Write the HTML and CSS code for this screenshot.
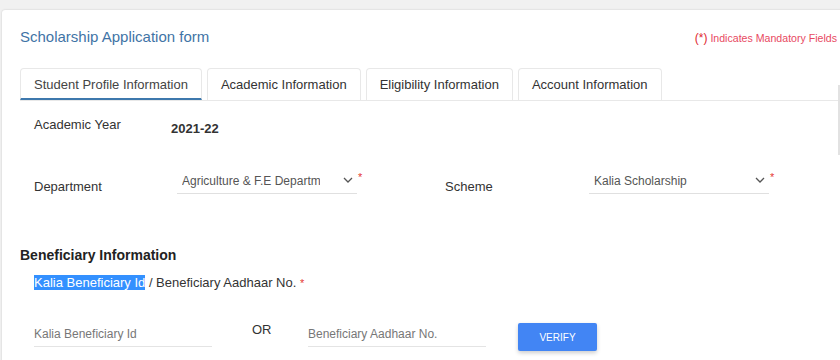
FILE: index.html
```html
<!DOCTYPE html>
<html>
<head>
<meta charset="utf-8">
<link rel="stylesheet" href="styles.css">
</head>
<body>
<div class="card">
  <div class="header">
    <h1 class="title">Scholarship Application form</h1>
    <div class="mandatory"><span class="star">(*)</span> Indicates Mandatory Fields</div>
  </div>
  <div class="tabs">
    <div class="tab active">Student Profile Information</div>
    <div class="tab">Academic Information</div>
    <div class="tab">Eligibility Information</div>
    <div class="tab">Account Information</div>
  </div>
  <div class="year-row">
    <div class="year-label">Academic Year</div>
    <div class="year-value">2021-22</div>
  </div>
  <div class="select-row">
    <div class="field-label">Department</div>
    <div class="select"><span class="select-text">Agriculture &amp; F.E Departme</span><svg class="chev" width="10" height="6" viewBox="0 0 10 6"><polyline points="1,1 5,5 9,1" fill="none" stroke="#555" stroke-width="1.3"/></svg></div>
    <div class="req">*</div>
    <div class="field-label">Scheme</div>
    <div class="select"><span class="select-text">Kalia Scholarship</span><svg class="chev" width="10" height="6" viewBox="0 0 10 6"><polyline points="1,1 5,5 9,1" fill="none" stroke="#555" stroke-width="1.3"/></svg></div>
    <div class="req">*</div>
  </div>
  <h2 class="section">Beneficiary Information</h2>
  <div class="sub"><span class="sel">Kalia Beneficiary Id</span> / Beneficiary Aadhaar No. <span class="req-inline">*</span></div>
  <div class="input-row">
    <div class="input">Kalia Beneficiary Id</div>
    <div class="or">OR</div>
    <div class="input">Beneficiary Aadhaar No.</div>
    <button class="verify">VERIFY</button>
  </div>
</div>
<div class="edge"></div>
</body>
</html>
```
FILE: styles.css
```css
html, body {
  margin: 0;
  padding: 0;
  overflow: hidden;
}
body {
  background: #f1f1f1;
  font-family: "Liberation Sans", Arial, sans-serif;
  color: #333;
  width: 840px;
  height: 360px;
  padding: 10px 0 0 2px;
  box-sizing: border-box;
}
.card {
  background: #fff;
  width: 850px;
  height: 360px;
  border-radius: 3px;
  box-shadow: 0 0 2px rgba(0,0,0,0.18);
  padding: 18px 0 0 18px;
  box-sizing: border-box;
}
.header {
  display: flex;
  justify-content: space-between;
  align-items: center;
  width: 817px;
  height: 18px;
}
.title {
  margin: 0;
  font-size: 15px;
  font-weight: normal;
  color: #3f74a6;
  line-height: 18px;
}
.mandatory {
  font-size: 10.6px;
  color: #e8495f;
  padding-top: 2px;
  white-space: nowrap;
}
.star {
  font-size: 12px;
  color: #e01f2f;
}
.tabs {
  display: flex;
  gap: 5px;
  margin-top: 22px;
  border-bottom: 1px solid #e8e8e8;
}
.tab {
  height: 32px;
  padding: 0 13px;
  border: 1px solid #e8e8e8;
  border-bottom: none;
  border-radius: 4px 4px 0 0;
  font-size: 13px;
  line-height: 32px;
  color: #333;
  box-sizing: border-box;
}
.tab.active {
  color: #444;
  border-bottom: 2px solid #3d78ad;
  line-height: 31px;
}
.year-row {
  display: flex;
  align-items: flex-start;
  padding-left: 14px;
  margin-top: 16px;
  height: 22px;
}
.year-label {
  width: 137px;
  font-size: 13px;
  line-height: 16px;
}
.year-value {
  font-size: 13px;
  font-weight: bold;
  line-height: 16px;
  margin-top: 4px;
}
.select-row {
  display: grid;
  grid-template-columns: 143px 180px 88px 144px 180px 20px;
  padding-left: 14px;
  margin-top: 29px;
  align-items: start;
}
.field-label {
  font-size: 13px;
  line-height: 16px;
  margin-top: 11px;
}
.select {
  display: flex;
  align-items: center;
  justify-content: space-between;
  height: 25px;
  border-bottom: 1px solid #e0e0e0;
  padding: 0 4px 0 5px;
}
.select-text {
  font-size: 12px;
  color: #555;
  white-space: nowrap;
  overflow: hidden;
  width: 138px;
}
.chev {
  margin-top: -2px;
}
.req {
  color: #e53935;
  font-size: 11px;
  padding-left: 1px;
  margin-top: 3px;
}
.section {
  margin: 51px 0 0 0;
  font-size: 14px;
  font-weight: bold;
  color: #222;
  line-height: 18px;
}
.sub {
  margin-top: 10px;
  padding-left: 14px;
  font-size: 13px;
  line-height: 18px;
}
.sel {
  background: #3390ff;
  color: #fff;
}
.req-inline {
  color: #e53935;
  font-size: 11px;
}
.input-row {
  display: flex;
  align-items: flex-start;
  padding-left: 14px;
  margin-top: 30px;
}
.input {
  width: 178px;
  height: 24px;
  border-bottom: 1px solid #e4e4e4;
  font-size: 12px;
  color: #777;
  line-height: 24px;
  flex: none;
}
.or {
  width: 96px;
  padding-left: 40px;
  box-sizing: border-box;
  font-size: 13px;
  line-height: 16px;
  margin-top: 0;
  color: #333;
  flex: none;
}
.verify {
  margin-left: 32px;
  margin-top: 1px;
  width: 79px;
  height: 28px;
  background: #4285f4;
  border: none;
  border-radius: 2px;
  color: #fff;
  font-family: "Liberation Sans", Arial, sans-serif;
  font-size: 10px;
  box-shadow: 0 2px 4px rgba(0,0,0,0.2);
  padding: 0;
  flex: none;
}
.edge {
  position: fixed;
  right: 0;
  top: 85px;
  width: 2px;
  height: 70px;
  background: #e2e2e2;
}
```
